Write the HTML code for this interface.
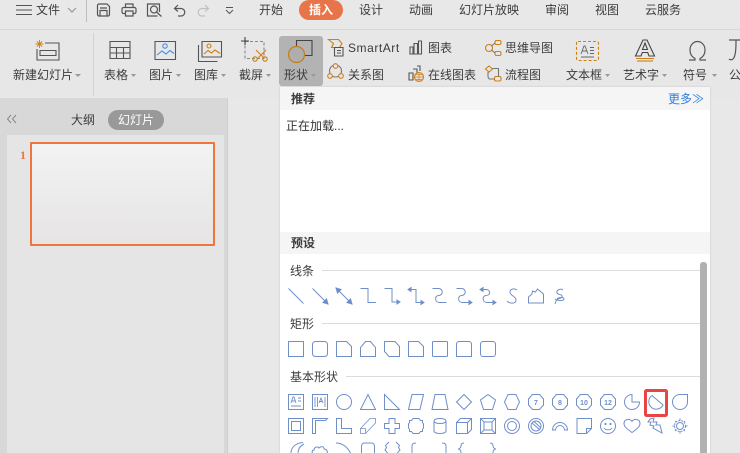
<!DOCTYPE html>
<html lang="zh"><head><meta charset="utf-8"><style>
html,body{margin:0;padding:0}
body{width:740px;height:453px;overflow:hidden;position:relative;background:#e9e9e9;font-family:"Liberation Sans","Noto Sans CJK SC",sans-serif;font-size:12px;color:#3c3c3c}
.a{position:absolute}
.t{position:absolute;line-height:16px;white-space:nowrap}
svg{position:absolute;left:0;top:0}
</style></head><body>
<div class="a" style="left:0;top:0;width:740px;height:29px;background:#e8e8e8"></div>
<div class="a" style="left:0;top:29px;width:740px;height:1px;background:#d8d8d8"></div>
<div class="a" style="left:0;top:30px;width:740px;height:68px;background:#e7e7e7"></div>
<div class="a" style="left:0;top:98px;width:228px;height:355px;background:#d8d8d8"></div>
<div class="a" style="left:227px;top:98px;width:1px;height:355px;background:#cfcfcf"></div>
<div class="a" style="left:228px;top:98px;width:512px;height:355px;background:#e8e8e8"></div>
<div class="a" style="left:7px;top:135px;width:217px;height:318px;background:#e6e5e5"></div>
<div class="a" style="left:30px;top:142px;width:185px;height:104px;box-sizing:border-box;border:2px solid #f0743e;background:linear-gradient(#f3f3f3,#e6e4e4);border-radius:1px"></div>
<div class="a" style="left:108px;top:110px;width:56px;height:20px;background:#999;border-radius:10px"></div>
<div class="a" style="left:279px;top:36px;width:44px;height:50px;background:#b3b3b3;border-radius:3px"></div>
<div class="a" style="left:299px;top:0;width:44px;height:20px;background:#e8754a;border-radius:10px"></div>
<div class="a" style="left:280px;top:87px;width:430px;height:366px;background:#fff;box-shadow:0 0 2px rgba(0,0,0,.15)"></div>
<div class="a" style="left:280px;top:87px;width:430px;height:23px;background:#f5f5f5"></div>
<div class="a" style="left:280px;top:232px;width:430px;height:22px;background:#f5f5f5"></div>
<div class="a" style="left:700px;top:262px;width:7px;height:191px;background:#b1b1b1;border-radius:3px 3px 0 0"></div>
<div class="a" style="left:86px;top:0;width:1px;height:22px;background:#bdbdbd"></div>
<div class="a" style="left:93px;top:33px;width:1px;height:63px;background:#d2d2d2"></div>
<div class="a" style="left:322px;top:270px;width:378px;height:1px;background:#dcdcdc"></div>
<div class="a" style="left:322px;top:323px;width:378px;height:1px;background:#dcdcdc"></div>
<div class="a" style="left:346px;top:376px;width:354px;height:1px;background:#dcdcdc"></div>

<span class="t" style="left:36px;top:2px">文件</span>
<span class="t" style="left:259px;top:2px">开始</span>
<span class="t" style="left:309px;top:2px;color:#fff;font-weight:bold">插入</span>
<span class="t" style="left:359px;top:2px">设计</span>
<span class="t" style="left:409px;top:2px">动画</span>
<span class="t" style="left:459px;top:2px">幻灯片放映</span>
<span class="t" style="left:545px;top:2px">审阅</span>
<span class="t" style="left:595px;top:2px">视图</span>
<span class="t" style="left:645px;top:2px">云服务</span>

<span class="t" style="left:13px;top:67px">新建幻灯片</span>
<span class="t" style="left:104px;top:67px">表格</span>
<span class="t" style="left:149px;top:67px">图片</span>
<span class="t" style="left:194px;top:67px">图库</span>
<span class="t" style="left:239px;top:67px">截屏</span>
<span class="t" style="left:284px;top:67px">形状</span>
<span class="t" style="left:348px;top:40px;letter-spacing:.55px">SmartArt</span>
<span class="t" style="left:348px;top:67px">关系图</span>
<span class="t" style="left:428px;top:40px">图表</span>
<span class="t" style="left:428px;top:67px">在线图表</span>
<span class="t" style="left:505px;top:40px">思维导图</span>
<span class="t" style="left:505px;top:67px">流程图</span>
<span class="t" style="left:566px;top:67px">文本框</span>
<span class="t" style="left:623px;top:67px">艺术字</span>
<span class="t" style="left:683px;top:67px">符号</span>
<span class="t" style="left:729px;top:67px">公</span>

<span class="t" style="left:71px;top:112px">大纲</span>
<span class="t" style="left:118px;top:112px;color:#fff">幻灯片</span>
<span class="t" style="left:20px;top:147px;color:#f0743e;font-weight:bold;font-family:'Liberation Serif',serif">1</span>

<span class="t" style="left:291px;top:91px;font-weight:bold">推荐</span>
<span class="t" style="left:668px;top:91px;color:#2f7fd8">更多≫</span>
<span class="t" style="left:286px;top:118px;color:#333">正在加载...</span>
<span class="t" style="left:291px;top:235px;font-weight:bold">预设</span>
<span class="t" style="left:290px;top:263px">线条</span>
<span class="t" style="left:290px;top:316px">矩形</span>
<span class="t" style="left:290px;top:369px">基本形状</span>

<svg width="740" height="453" viewBox="0 0 740 453" fill="none">
<!-- quick bar -->
<g stroke="#555" stroke-width="1.2">
<path d="M16 5.500h16M16 10h16M16 14.500h16" stroke-width="1"/>
<path d="M68 8l4 4 4-4" stroke="#999"/>
<path d="M97.500 5.500a1.500 1.500 0 0 1 1.500-1.500h8l2.500 2.500v8a1.500 1.500 0 0 1-1.500 1.500h-9a1.500 1.500 0 0 1-1.500-1.500zM100 8h7M100 16v-5.500h7V16"/>
<path d="M125.500 7.500V4h7.500v3.500M125.500 13.500h-2a1.500 1.500 0 0 1-1.500-1.500V9a1.500 1.500 0 0 1 1.500-1.500h11a1.500 1.500 0 0 1 1.500 1.500v3a1.500 1.500 0 0 1-1.500 1.500h-2M125.500 11h7.500v5h-7.500z"/>
<path d="M156 4h-8.500v12h10M152.500 4h7v8"/>
<circle cx="154" cy="9.500" r="3.500"/><path d="M156.500 12l5 4.500"/>
<path d="M178 5l-3.500 3.500 3.500 3M175 8.500h6a3.500 3.500 0 0 1 0 7.500h-3"/>
<path d="M205 5l3.500 3.500-3.500 3M208 8.500h-6a3.500 3.500 0 0 0 0 7.500h3" stroke="#c0c0c0"/>
<path d="M226 7.500h7M226 10l3.500 3.500 3.500-3.500" stroke-width="1"/>
</g>
<g stroke="#555" stroke-width="1.1">
<!-- new slide -->
<path d="M45 43h14v17H37V49M40 50.500h16v5H40z"/>
<path d="M39.500 40v8M35.500 44h8M36.800 41.300l5.400 5.400M42.200 41.300l-5.400 5.400" stroke="#cf7f14" stroke-width=".9"/>
<!-- table -->
<path d="M110 41.500h20v17h-20zM110 47.500h20M110 53h20M116.500 47.500v11M123.500 47.500v11"/>
<!-- picture -->
<path d="M155 41.500h20.500v18H155z"/>
<circle cx="165" cy="46" r="2.200" stroke="#4a90e2"/>
<path d="M157 55l5-4 4 3 4-3.500 4 3" stroke="#4a90e2"/>
<!-- gallery -->
<path d="M202 41.500h19.500v15.500H202zM198.500 45v16.500h19"/>
<circle cx="209" cy="46" r="2" stroke="#cf7f14"/>
<path d="M204 54l4-3.500 3.500 2.500 3.500-3 5 3.500" stroke="#cf7f14"/>
<!-- screenshot -->
<path d="M245 41.500h19v17h-19z" stroke="#888" stroke-dasharray="3 2"/>
<path d="M245 37v8M241 41h8" stroke="#444"/>
<path d="M256 50l8 8M266 50l-8 8" stroke="#cf7f14"/>
<circle cx="255" cy="59" r="2.200" stroke="#cf7f14"/><circle cx="265" cy="59" r="2.200" stroke="#cf7f14"/>
<!-- shapes -->
<path d="M296.500 40.500h15.500v15h-15.500z" stroke="#444"/>
<circle cx="296.500" cy="54.500" r="8" fill="#aeaeae" stroke="#c77d15" stroke-width="1.200"/>
<!-- smartart -->
<path d="M328.500 39.500h10l3.500 4-2.500 4h-8l2-4z" stroke="#cf7f14"/>
<path d="M334.500 47.500h8.500v8.500h-8.500zM337 50.500h4M337 53h4" stroke="#555"/>
<circle cx="335.500" cy="71" r="6" stroke="#777"/>
<circle cx="335.500" cy="66" r="2.300" fill="#e7e7e7" stroke="#cf7f14"/><circle cx="330" cy="76" r="2.300" fill="#e7e7e7" stroke="#cf7f14"/><circle cx="341" cy="76" r="2.300" fill="#e7e7e7" stroke="#cf7f14"/>
<!-- chart -->
<path d="M410 47h3v7h-3zM414 43.500h3.500V54H414zM418.500 41h3v13h-3z"/>
<path d="M409 73h4v7h-4zM413 69h4v5M417 66h3v5"/>
<circle cx="419" cy="77" r="4.500" stroke="#cf7f14" fill="#e7e7e7"/><path d="M414.500 77h9M419 72.500v9M416 74.500h6M416 79.500h6" stroke="#cf7f14" stroke-width=".7"/>
<!-- mind -->
<circle cx="489" cy="48" r="3.500" stroke="#cf7f14"/>
<rect x="495" y="40.500" width="6" height="4" rx="1.500" stroke="#cf7f14"/><rect x="495" y="51.500" width="6" height="4" rx="1.500" stroke="#cf7f14"/>
<path d="M491.500 46l3.500-3M491.500 50l3.500 3" stroke="#777"/>
<path d="M489 66l3.500 3-3.500 3-3.500-3z" stroke="#cf7f14"/>
<rect x="494.500" y="76.500" width="6.500" height="4.500" rx="1.500" stroke="#cf7f14"/>
<path d="M488 72v4c0 2 1 3 2 3h4.500M492.500 68.500h6v8" stroke="#777"/>
<!-- textbox -->
<rect x="576.500" y="41.500" width="22" height="19" rx="1.500" stroke="#cf7f14" stroke-dasharray="3 2"/>
<path d="M581 54l3-8h1l3 8M582 51h5M590 47.500h4M590 50.500h4M590 53.500h4M581 57h13" stroke="#666" stroke-width=".9"/>
<!-- wordart -->
<path d="M635.500 56h5.500l1.300-3.500h5.400L649 56h5.500L647 40h-4z" stroke="#444"/>
<path d="M642.500 49.500h5L645 43z" stroke="#444"/>
<path d="M636 58.500h18" stroke="#cf7f14"/><path d="M637 61h16" stroke="#cf7f14"/>
</g>
<path d="M689 60h6v-1.500c-3-1.500-5-4.500-5-8.500 0-5 3.500-8.500 7.500-8.500s7.500 3.500 7.500 8.500c0 4-2 7-5 8.500V60h6" stroke="#555" stroke-width="1.200"/>
<path d="M729 40h11M736 40c0 7 0 16-3 19-1 1-3 1-4 0" stroke="#555" stroke-width="1.200"/>
<!-- small arrows -->
<g fill="#999">
<path d="M75 74h6l-3 3zM131 74h5l-2.500 3zM176 74h5l-2.500 3zM221 74h5l-2.500 3zM266 74h5l-2.500 3zM311 74h5l-2.500 3zM605 74h5l-2.500 3zM662 74h5l-2.500 3zM712 74h5l-2.500 3z"/>
</g>
<!-- collapse -->
<path d="M11 115l-3.500 4 3.500 4M16 115l-3.500 4 3.500 4" stroke="#888"/>

<!-- shapes grid -->
<g stroke="#6f8fca" stroke-width="1">
<!-- line row y288 -->
<g transform="translate(288,288)"><path d="M.5.500l15 15"/></g>
<g transform="translate(312,288)"><path d="M.5.500l14 14"/><path d="M16 16l-5-1.500 3.500-3.500z" fill="#6f8fca"/></g>
<g transform="translate(336,288)"><path d="M3 3l10 10"/><path d="M0 0l5 1.500-3.500 3.500zM16 16l-5-1.500 3.500-3.500z" fill="#6f8fca"/></g>
<g transform="translate(360,288)"><path d="M.5.500h7.500v14h8"/></g>
<g transform="translate(384,288)"><path d="M.5.500h7.500v13.500h7"/><path d="M16 14l-3-2v4z" fill="#6f8fca"/></g>
<g transform="translate(408,288)"><path d="M2 1.500h6v13h6"/><path d="M0 1.500l3-2v4zM16 14.500l-3-2v4z" fill="#6f8fca"/></g>
<g transform="translate(432,288)"><path d="M.5.500h6c5 0 5 7 0 7-4 0-4 7 1 7h7"/></g>
<g transform="translate(456,288)"><path d="M.5.500h5c5 0 5 7 0 7-4 0-4 7 1 7h7"/><path d="M16 14.500l-3-2v4z" fill="#6f8fca"/></g>
<g transform="translate(480,288)"><path d="M2 1.500h4c5 0 5 6 0 6-4 0-4 7 1 7h7"/><path d="M0 1.500l3-2v4zM16 14.500l-3-2v4z" fill="#6f8fca"/></g>
<path d="M517 290c-3-2-7-1-7 2 0 4 6 4 6 8 0 4-6 4-9 1"/>
<path d="M528.500 303h15v-9l-6-5-2 3-3-1-.5 3-3.500 3z"/>
<path d="M563 290c-2-2-7 0-6 3 1 2 6 1 5 4-1 2-5 1-6 4l-1 3M555 299c3 2 9 2 9 0s-5-2-7 0"/>
<!-- rect row y341 -->
<g transform="translate(288,341)">
<path d="M.5.500h15v15H.5z"/>
<rect x="24.500" y=".5" width="15" height="15" rx="3"/>
<path d="M48.500.500h10l5 5v10h-15z"/>
<path d="M72.500 15.500v-9l5-6h5l5 6v9z"/>
<path d="M96.500.500h10.500l4.500 5v10h-10.500l-4.500-5z"/>
<path d="M120.500.500h10l5 5v10h-15z"/>
<rect x="144.500" y=".5" width="15" height="15" rx="1"/>
<path d="M171 .5h10a2.500 2.500 0 0 1 2.500 2.500v12.500h-15V3a2.500 2.500 0 0 1 2.500-2.500z"/>
<rect x="192.500" y=".5" width="15" height="15" rx="2.500"/>
</g>
<!-- basic row1 y394 -->
<g transform="translate(288,394)">
<path d="M.5.500h15v15H.5z"/><path d="M3 9l2-6h1l2 6M3.500 7h4M10 4h3M10 7h3M3 12h10" stroke-width=".9"/>
<path d="M24.500.500h15v15h-15z"/><path d="M27 3v10M29.500 3v10M37 3v10M31 9l2-5 2 5M31.500 7.500h3" stroke-width=".9"/>
<circle cx="56" cy="8" r="7.500"/>
<path d="M80 .5l7.500 15h-15z"/>
<path d="M96.500.500l15 15h-15z"/>
<path d="M124 .5h11.500l-3.500 15h-11.500z"/>
<path d="M147 .5h10l3 15h-16z"/>
<path d="M176 .5l7.500 7.500-7.500 7.500-7.500-7.500z"/>
<path d="M200 .5l7.500 5.500-3 9.500h-9l-3-9.500z"/>
<path d="M216.500 8l3.500-7.500h8l3.500 7.500-3.500 7.500h-8z"/>
<path d="M240.500 5l4-4.500h7l4 4.500v6l-4 4.500h-7l-4-4.500z"/>
<path d="M264.500 5l4-4.500h7l4 4.500v6l-4 4.500h-7l-4-4.500z"/>
<path d="M288.500 5l4-4.500h7l4 4.500v6l-4 4.500h-7l-4-4.500z"/>
<path d="M312.500 5l4-4.500h7l4 4.500v6l-4 4.500h-7l-4-4.500z"/>
<path d="M344 .5a7.500 7.500 0 1 0 7.500 7.500H344z"/>
<path d="M364 1.500L375 11A7.500 7.500 0 1 1 364 1.500z"/>
<path d="M392 .5h7.500V8a7.500 7.500 0 1 1-15 0 7.500 7.500 0 0 1 7.500-7.500z"/>
</g>
<g font-family="Liberation Sans" font-size="7" font-weight="bold" fill="#6f8fca" stroke="none" text-anchor="middle">
<text x="536" y="405">7</text><text x="560" y="405">8</text><text x="584" y="405">10</text><text x="608" y="405">12</text>
</g>
<!-- row 2 y418 -->
<g transform="translate(288,418)">
<path d="M.5.500h15v15H.5zM3.500 3.500h9v9h-9z"/>
<path d="M24.500 15.500V.500h15l-2 2h-10v13z"/>
<path d="M48.500.500h5v10h10v5h-15z"/>
<path d="M72.500 10.500L82 .5h5.500v4.500l-10 10.500h-5zM72.500 10.500h5v5" stroke-width=".8"/>
<path d="M101 .5h6v5h4.500v5H107v5h-6v-5h-4.500v-5H101z"/>
<path d="M125 .5h6l1.500 2h2v2l1 1.500v4l-1 1.500v2h-2l-1.500 2h-6l-1.500-2h-2v-2l-1-1.500V6l1-1.500v-2h2z"/>
<path d="M144.500 3v10c0 3.300 12 3.300 12 0V3M144.500 3c0-3.300 12-3.300 12 0s-12 3.300-12 0z" transform="translate(1.500,0)"/>
<path d="M168.500 4.500h11v11h-11zM168.500 4.500l4-4h11v11l-4 4M179.500 4.500l4-4"/>
<path d="M192.500.500h15v15h-15zM196 4h8v8h-8zM192.500.500L196 4M207.500.500L204 4M192.500 15.500L196 12M207.500 15.500L204 12"/>
<circle cx="224" cy="8" r="7.500"/><circle cx="224" cy="8" r="4.500"/>
<circle cx="248" cy="8" r="7.500"/><circle cx="248" cy="8" r="5"/><path d="M244 5l8 7M246 3.500l6.500 6"/>
<path d="M264.500 12a7.500 7.500 0 0 1 15 0h-3a4.500 4.500 0 0 0-9 0z"/>
<path d="M289 .5h14.500v10l-5 5h-9.500zM303.500 10.500h-5v5"/>
<circle cx="320" cy="8" r="7.500"/><circle cx="317.500" cy="6" r=".6"/><circle cx="322.500" cy="6" r=".6"/><path d="M316 10c2 2.500 6 2.500 8 0"/>
<path d="M344 14.500c-4-3-8-5.500-8-9 0-4.500 6-5.500 8-2 2-3.500 8-2.500 8 2 0 3.500-4 6-8 9z"/>
<path d="M362 1l4-1-1 4 4 0-1 3 4 0 2 8-9-5 1-2-4-1 1-3-3 0z"/>
<circle cx="392" cy="8" r="3.500"/><circle cx="392" cy="8" r="5.500" stroke-dasharray="2 1"/><path d="M392 .5v2M392 13.500v2M384.500 8h2M397.500 8h2M387 3l1 1M397 3l-1 1M387 13l1-1M397 13l-1-1"/>
</g>
<!-- row 3 y442 -->
<g transform="translate(288,442)">
<path d="M15 .5C7 1 3 6 3 11M16 2c-4 2-6 5-6 9"/>
<path d="M26 12c-3-1-2-4 0-4 0-3 4-4 5-2 2-2 5-2 5 1 3 0 4 3 3 5"/>
<path d="M48 1c7 0 12 5 15 11"/>
<path d="M73.500 11V4a3 3 0 0 1 3-3h7a3 3 0 0 1 3 3v7"/>
<path d="M101 0l-3.500 3.500 1 2-1.500 2.500 3 3.500M108 0l3.500 3.500-1 2 1.500 2.500-3 3.500"/>
<path d="M128 1c-3 0-4 1-4 3v8"/>
<path d="M154 1c3 0 4 1 4 3v8"/>
<path d="M176 1c-3 0-3 2-3 3 0 2-2 3-3 3 1 0 3 1 3 3v2"/>
<path d="M202 1c3 0 3 2 3 3 0 2 2 3 3 3-1 0-3 1-3 3v2"/>
</g>
</g>
<!-- highlight -->
<rect x="645.500" y="390.500" width="21" height="25" rx="1" stroke="#ea4545" stroke-width="3" fill="none"/>
</svg>
</body></html>
